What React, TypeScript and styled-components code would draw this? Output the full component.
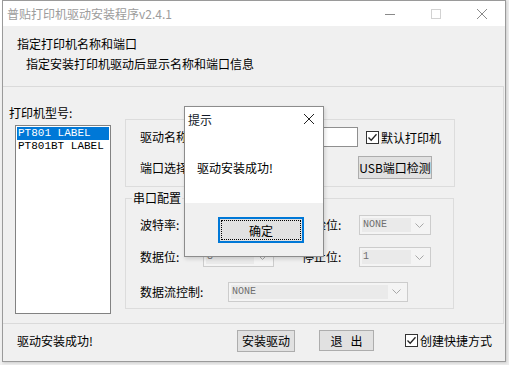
import styled, { createGlobalStyle } from "styled-components";

const GlobalStyle = createGlobalStyle`
  html, body {
    margin: 0;
    padding: 0;
    background: #f0f0f0;
  }
  * {
    box-sizing: border-box;
  }
`;

const UI_FONT = `"Noto Sans CJK SC", "Noto Sans", sans-serif`;
const MONO_FONT = `"Liberation Mono", "Noto Sans CJK SC", monospace`;

const Screen = styled.div`
  width: 509px;
  height: 365px;
  display: flex;
  align-items: flex-start;
  overflow: hidden;
  background: #ececec;
  font-family: ${UI_FONT};
  font-size: 12px;
  color: #000;
`;

const BehindStrip = styled.div`
  width: 2px;
  height: 365px;
  background: linear-gradient(#ffffff 0 50px, #f0f0f0 50px 100%);
`;

const Window = styled.div`
  position: relative;
  width: 504px;
  height: 362px;
  border: 1px solid #9a9a9a;
  display: flex;
  flex-direction: column;
  background: #f0f0f0;
  box-shadow: 1px 1px 2px rgba(0, 0, 0, 0.12);
`;

const TitleBar = styled.div`
  height: 25px;
  flex-shrink: 0;
  background: #fff;
  display: flex;
  align-items: center;
  padding-left: 4px;
`;

const TitleText = styled.span`
  flex: 1;
  color: #9c9c9c;
  font-size: 12px;
  line-height: 16px;
`;

const CaptionButton = styled.div`
  width: 46px;
  height: 25px;
  display: flex;
  align-items: center;
  justify-content: center;
`;

const Header = styled.div`
  height: 60px;
  flex-shrink: 0;
  padding: 10px 0 0 14px;
`;

const HeaderLine = styled.div<{ $indent?: number; $gap?: number }>`
  line-height: 16px;
  margin-left: ${(p) => p.$indent ?? 0}px;
  margin-top: ${(p) => p.$gap ?? 0}px;
`;

const Panel = styled.div`
  height: 238px;
  flex-shrink: 0;
  margin-right: 1px;
  border: 1px solid #dadada;
  border-left: none;
  display: flex;
`;

const LeftColumn = styled.div`
  padding: 18px 0 0 6px;
  display: flex;
  flex-direction: column;
`;

const Label = styled.span<{ $width?: number }>`
  display: inline-block;
  line-height: 16px;
  white-space: nowrap;
  width: ${(p) => (p.$width ? `${p.$width}px` : "auto")};
  flex-shrink: 0;
`;

const ListBox = styled.div`
  margin: 4px 0 0 6px;
  width: 96px;
  height: 189px;
  background: #fff;
  border: 1px solid #828282;
  padding: 1px;
  font-family: ${MONO_FONT};
  font-size: 11px;
`;

const ListItem = styled.div<{ $selected?: boolean }>`
  height: 13px;
  line-height: 13px;
  padding-left: 1px;
  white-space: pre;
  background: ${(p) => (p.$selected ? "#0078d7" : "transparent")};
  color: ${(p) => (p.$selected ? "#fff" : "#000")};
`;

const RightColumn = styled.div`
  margin-left: 14px;
  padding-top: 32px;
  display: flex;
  flex-direction: column;
`;

const GroupBox = styled.div`
  width: 330px;
  height: 68px;
  border: 1px solid #dcdcdc;
  padding: 7px 0 0 14px;
  display: flex;
  flex-direction: column;
  gap: 9px;
`;

const FormRow = styled.div<{ $height: number }>`
  height: ${(p) => p.$height}px;
  display: flex;
  align-items: center;
`;

const TextInput = styled.div`
  width: 158px;
  height: 20px;
  background: #fff;
  border: 1px solid #8f8f8f;
`;

const CheckWrap = styled.label<{ $offset?: number }>`
  display: flex;
  align-items: center;
  gap: 2px;
  margin-left: ${(p) => p.$offset ?? 0}px;
  white-space: nowrap;
`;

const CheckBox = styled.span`
  width: 13px;
  height: 13px;
  border: 1px solid #333;
  background: #fff;
  display: flex;
  align-items: center;
  justify-content: center;
`;

const Button = styled.div<{ $width: number; $height: number; $offset?: number }>`
  width: ${(p) => p.$width}px;
  height: ${(p) => p.$height}px;
  margin-left: ${(p) => p.$offset ?? 0}px;
  background: #e1e1e1;
  border: 1px solid #adadad;
  display: flex;
  align-items: center;
  justify-content: center;
  white-space: pre;
  flex-shrink: 0;
`;

const ComboBox = styled.div<{ $width: number }>`
  width: ${(p) => p.$width}px;
  height: 20px;
  flex-shrink: 0;
  border: 1px solid #cccccc;
  background: #f4f4f4;
  padding: 2px;
  display: flex;
  align-items: center;
`;

const ComboValue = styled.span`
  flex: 1;
  height: 14px;
  line-height: 14px;
  background: #eaeaea;
  color: #6f6f6f;
  font-family: ${MONO_FONT};
  font-size: 10px;
  padding-left: 1px;
`;

const ComboArrow = styled.span`
  width: 17px;
  display: flex;
  justify-content: center;
`;

const SerialGroup = styled.fieldset`
  margin: 3px 0 0 0;
  padding: 0 0 9px 14px;
  width: 329px;
  border: 1px solid #dcdcdc;
  min-inline-size: 0;
`;

const Legend = styled.legend`
  margin-left: -8px;
  padding: 0 1px;
  line-height: 16px;
  font-size: 12px;
`;

const SerialGrid = styled.div`
  margin-top: 9px;
  display: grid;
  grid-template-columns: 63px 71px 28px 57px 72px;
  grid-template-rows: 20px 20px 20px;
  row-gap: 12px;
  align-items: center;
`;

const WideCell = styled.div`
  grid-column: 1 / -1;
  margin-top: 5px;
  display: flex;
  align-items: center;
`;

const StatusRow = styled.div`
  flex: 1;
  display: flex;
  align-items: center;
  padding: 0 0 4px 14px;
`;

const Dialog = styled.div`
  position: absolute;
  left: 181px;
  top: 105px;
  width: 140px;
  height: 151px;
  border: 1px solid #8c8c8c;
  background: #f0f0f0;
  display: flex;
  flex-direction: column;
  box-shadow: 1px 2px 4px rgba(0, 0, 0, 0.15);
`;

const DialogTitle = styled.div`
  height: 24px;
  background: #fff;
  display: flex;
  align-items: center;
  justify-content: space-between;
  padding: 0 9px 0 3px;
  color: #101828;
`;

const DialogBody = styled.div`
  height: 72px;
  background: #fff;
  padding: 29px 0 0 12px;
  line-height: 16px;
`;

const DialogFooter = styled.div`
  padding: 14px 0 0 33px;
`;

const DefaultButton = styled.div`
  width: 86px;
  height: 26px;
  border: 2px solid #0078d7;
  background: #e1e1e1;
  padding: 1px;
`;

const FocusRect = styled.div`
  height: 100%;
  border: 1px dotted #000;
  display: flex;
  align-items: center;
  justify-content: center;
`;

const Chevron = () => (
  <svg width="9" height="5" viewBox="0 0 9 5">
    <path d="M0.5 0.5 L4.5 4.5 L8.5 0.5" fill="none" stroke="#a8a8a8" strokeWidth="1" />
  </svg>
);

const Check = () => (
  <svg width="11" height="11" viewBox="0 0 11 11">
    <path d="M1.5 5.5 L4.2 8.3 L9.5 2.2" fill="none" stroke="#222" strokeWidth="1.3" />
  </svg>
);

function Combo({ width, value }: { width: number; value: string }) {
  return (
    <ComboBox $width={width}>
      <ComboValue>{value}</ComboValue>
      <ComboArrow>
        <Chevron />
      </ComboArrow>
    </ComboBox>
  );
}

export default function App() {
  return (
    <>
      <GlobalStyle />
      <Screen>
        <BehindStrip />
        <Window>
          <TitleBar>
            <TitleText>普贴打印机驱动安装程序v2.4.1</TitleText>
            <CaptionButton>
              <svg width="10" height="10" viewBox="0 0 10 10">
                <path d="M0 5.5 H10" stroke="#8a8a8a" strokeWidth="1" />
              </svg>
            </CaptionButton>
            <CaptionButton>
              <svg width="10" height="10" viewBox="0 0 10 10">
                <rect x="0.5" y="0.5" width="9" height="9" fill="none" stroke="#d2d2d2" />
              </svg>
            </CaptionButton>
            <CaptionButton>
              <svg width="10" height="10" viewBox="0 0 10 10">
                <path d="M0 0 L10 10 M10 0 L0 10" stroke="#8a8a8a" strokeWidth="1" />
              </svg>
            </CaptionButton>
          </TitleBar>

          <Header>
            <HeaderLine>指定打印机名称和端口</HeaderLine>
            <HeaderLine $indent={9} $gap={4}>
              指定安装打印机驱动后显示名称和端口信息
            </HeaderLine>
          </Header>

          <Panel>
            <LeftColumn>
              <Label>打印机型号:</Label>
              <ListBox>
                <ListItem $selected>PT801 LABEL</ListItem>
                <ListItem>PT801BT LABEL</ListItem>
              </ListBox>
            </LeftColumn>

            <RightColumn>
              <GroupBox>
                <FormRow $height={20}>
                  <Label $width={60}>驱动名称</Label>
                  <TextInput />
                  <CheckWrap $offset={8}>
                    <CheckBox>
                      <Check />
                    </CheckBox>
                    默认打印机
                  </CheckWrap>
                </FormRow>
                <FormRow $height={23}>
                  <Label $width={60}>端口选择</Label>
                  <Combo width={118} value="" />
                  <Button $width={74} $height={23} $offset={40}>
                    USB端口检测
                  </Button>
                </FormRow>
              </GroupBox>

              <SerialGroup>
                <Legend>串口配置</Legend>
                <SerialGrid>
                  <Label>波特率:</Label>
                  <Combo width={71} value="" />
                  <span />
                  <Label>校验位:</Label>
                  <Combo width={72} value="NONE" />

                  <Label>数据位:</Label>
                  <Combo width={71} value="8" />
                  <span />
                  <Label>停止位:</Label>
                  <Combo width={72} value="1" />

                  <WideCell>
                    <Label $width={88}>数据流控制:</Label>
                    <Combo width={180} value="NONE" />
                  </WideCell>
                </SerialGrid>
              </SerialGroup>
            </RightColumn>
          </Panel>

          <StatusRow>
            <Label $width={220}>驱动安装成功!</Label>
            <Button $width={58} $height={22}>安装驱动</Button>
            <Button $width={55} $height={21} $offset={24}>
              退   出
            </Button>
            <CheckWrap $offset={31}>
              <CheckBox>
                <Check />
              </CheckBox>
              创建快捷方式
            </CheckWrap>
          </StatusRow>

          <Dialog>
            <DialogTitle>
              <span>提示</span>
              <svg width="10" height="10" viewBox="0 0 10 10">
                <path d="M0 0 L10 10 M10 0 L0 10" stroke="#222" strokeWidth="1" />
              </svg>
            </DialogTitle>
            <DialogBody>驱动安装成功!</DialogBody>
            <DialogFooter>
              <DefaultButton>
                <FocusRect>确定</FocusRect>
              </DefaultButton>
            </DialogFooter>
          </Dialog>
        </Window>
      </Screen>
    </>
  );
}
